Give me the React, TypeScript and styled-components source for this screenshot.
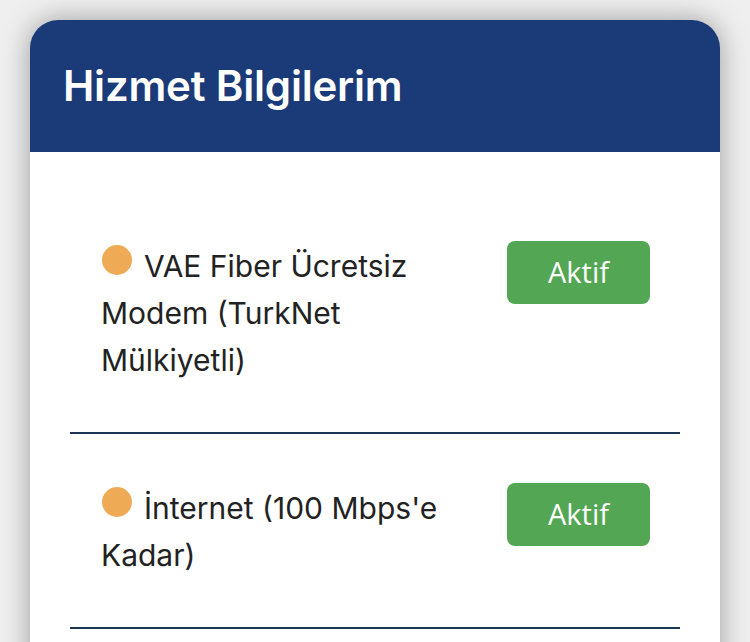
import React from "react"
import styled, { createGlobalStyle } from 'styled-components'

const GlobalStyle = createGlobalStyle`
  html, body {
    margin: 0;
    padding: 0;
    background: #efefef;
    overflow: hidden;
  }
`;

const Page = styled.div`
  width: 750px;
  height: 642px;
  padding: 20px 30px 0;
  box-sizing: border-box;
  background: #efefef;
  font-family: Inter, "Liberation Sans", sans-serif;
  overflow: hidden;
`;

const Card = styled.div`
  background: #ffffff;
  border-radius: 28px 28px 0 0;
  box-shadow: 0 0 28px rgba(0, 0, 0, 0.35);
  overflow: hidden;
  height: 660px;
`;

const Header = styled.div`
  background: #1a3a78;
  height: 132px;
  display: flex;
  align-items: center;
  padding: 0 33px;
  box-sizing: border-box;
`;

const Title = styled.h1`
  margin: 0 0 2px;
  color: #ffffff;
  font-size: 42px;
  font-weight: 600;
  letter-spacing: -0.2px;
`;

const List = styled.div`
  padding: 40px 40px 0;
`;

const Row = styled.div`
  display: flex;
  justify-content: space-between;
  align-items: flex-start;
  padding: 49px 30px 48px 31px;
  border-bottom: 2px solid #1c3658;
`;

const Name = styled.div`
  width: 360px;
  font-size: 30px;
  line-height: 47px;
  color: #222222;
  margin-top: 2px;
`;

const Dot = styled.span`
  display: inline-block;
  width: 30px;
  height: 30px;
  border-radius: 50%;
  background: #eeaa55;
  margin-right: 12px;
  margin-left: 1px;
  vertical-align: 2px;
`;

const StatusButton = styled.button`
  width: 143px;
  height: 63px;
  border: none;
  border-radius: 8px;
  background: #53a653;
  color: #ffffff;
  font-family: "Open Sans", sans-serif;
  font-size: 29px;
  padding: 0 0 2px;
  flex-shrink: 0;
`;

const services = [
  { name: "VAE Fiber Ücretsiz Modem (TurkNet Mülkiyetli)", status: "Aktif" },
  { name: "İnternet (100 Mbps'e Kadar)", status: "Aktif" },
];

const App: React.FC = () => {
  return (
    <>
      <GlobalStyle />
      <Page>
        <Card>
          <Header>
            <Title>Hizmet Bilgilerim</Title>
          </Header>
          <List>
            {services.map((s) => (
              <Row key={s.name}>
                <Name>
                  <Dot />
                  {s.name}
                </Name>
                <StatusButton>{s.status}</StatusButton>
              </Row>
            ))}
          </List>
        </Card>
      </Page>
    </>
  )
}

export default App;
